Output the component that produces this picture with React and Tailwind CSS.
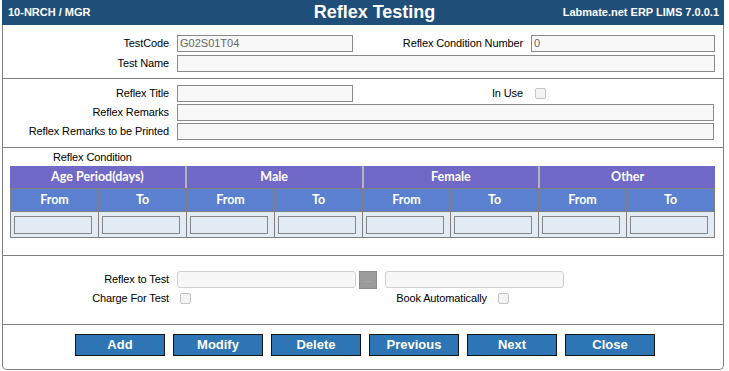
import React from "react";

const inp = "h-[17px] border border-[#8a8a8a] bg-[#f8f8f8] px-[2px] text-[11px] leading-[15px] text-[#666]";
const lbl = "text-right leading-[17px] whitespace-nowrap tracking-[-0.12px]";

function Check() {
  return <div className="h-[11px] w-[11px] rounded-[2px] border border-[#c4c4c4] bg-[#f4f4f4]" />;
}

function Btn({ children }) {
  return (
    <div className="flex h-[22px] w-[90px] items-center justify-center border border-[#141414] bg-[#2e75b6] text-[13px] font-bold text-white">
      {children}
    </div>
  );
}

export default function App() {
  const groups = ["Age Period(days)", "Male", "Female", "Other"];
  const cols = Array.from({ length: 8 }, (_, i) => (i % 2 === 0 ? "From" : "To"));
  return (
    <div className="ml-[2px] w-[722px] font-['Liberation_Sans',Arial,sans-serif] text-[11px] text-black">
      <div className="flex h-[25px] items-center bg-[#1f4e79] pl-[6px] pr-[5px] text-white">
        <div className="flex-1 text-[11px] font-bold">10-NRCH / MGR</div>
        <div className="ml-[22px] text-[18px] font-bold leading-[25px]">Reflex Testing</div>
        <div className="flex-1 text-right text-[11px] font-bold">Labmate.net ERP LIMS 7.0.0.1</div>
      </div>
      <div className="rounded-b-[5px] border border-t-0 border-[#808080]">
        {/* Section 1 */}
        <div className="grid grid-cols-[166px_176px_162px_184px] gap-x-[8px] gap-y-[3px] border-b border-[#808080] pb-[6px] pt-[10px]">
          <div className={lbl}>TestCode</div>
          <div className={inp}>G02S01T04</div>
          <div className={lbl}>Reflex Condition Number</div>
          <div className={inp}>0</div>
          <div className={lbl}>Test Name</div>
          <div className={`${inp} col-span-3`} />
        </div>
        {/* Section 2 */}
        <div className="grid grid-cols-[166px_176px_162px_184px] gap-x-[8px] gap-y-[2px] border-b border-[#808080] pb-[7px] pt-[6px]">
          <div className={lbl}>Reflex Title</div>
          <div className={inp} />
          <div className={lbl}>In Use</div>
          <div className="flex items-center pl-[4px]">
            <Check />
          </div>
          <div className={lbl}>Reflex Remarks</div>
          <div className={`${inp} col-span-3 mr-[1px]`} />
          <div className={lbl}>Reflex Remarks to be Printed</div>
          <div className={`${inp} col-span-3 mr-[1px]`} />
        </div>
        {/* Section 3 */}
        <div className="border-b border-[#808080] pb-[17px] pt-[2px]">
          <div className="pl-[50px] leading-[14px] tracking-[-0.12px]">Reflex Condition</div>
          <div className="ml-[7px] mt-[2px] w-[705px] font-['Lato',sans-serif] text-[12.5px] font-bold text-white">
            <div className="grid grid-cols-4 gap-x-[2px] bg-[#b4b4b4]">
              {groups.map((g) => (
                <div key={g} className="flex h-[22px] items-center justify-center bg-[#7169c8]">
                  {g}
                </div>
              ))}
            </div>
            <div className="grid grid-cols-8 border-b border-r border-[#808080]">
              {cols.map((c, i) => (
                <div key={"h" + i} className="flex h-[23px] items-center justify-center border-l border-t border-[#808080] bg-[#5a80cf]">
                  {c}
                </div>
              ))}
              {cols.map((c, i) => (
                <div key={"r" + i} className="flex h-[26px] items-center border-l border-t border-[#808080] bg-[#e2eaf4] px-[3px]">
                  <div className="h-[18px] w-[78px] border border-[#858585] bg-[#e2eaf4]" />
                </div>
              ))}
            </div>
          </div>
        </div>
        {/* Section 4 */}
        <div className="flex flex-col gap-y-[2px] border-b border-[#808080] pb-[17px] pt-[15px]">
          <div className="flex h-[17px] items-center">
            <div className={`${lbl} w-[166px]`}>Reflex to Test</div>
            <div className="ml-[8px] h-[17px] w-[179px] rounded-[3px] border border-[#d0d0d0] bg-[#f7f7f7]" />
            <div className="ml-[3px] flex h-[18px] w-[18px] items-center justify-center border border-[#8c8c8c] bg-[#9b9b9b] text-[7px] leading-none text-[#c8c8c8]">
              ...
            </div>
            <div className="ml-[8px] h-[17px] w-[179px] rounded-[3px] border border-[#d0d0d0] bg-[#f7f7f7]" />
          </div>
          <div className="flex h-[17px] items-center">
            <div className={`${lbl} w-[166px]`}>Charge For Test</div>
            <div className="ml-[11px]">
              <Check />
            </div>
            <div className={`${lbl} w-[296px]`}>Book Automatically</div>
            <div className="ml-[11px]">
              <Check />
            </div>
          </div>
        </div>
        {/* Buttons */}
        <div className="flex gap-x-[8px] pb-[13px] pl-[72px] pt-[9px]">
          <Btn>Add</Btn>
          <Btn>Modify</Btn>
          <Btn>Delete</Btn>
          <Btn>Previous</Btn>
          <Btn>Next</Btn>
          <Btn>Close</Btn>
        </div>
      </div>
    </div>
  );
}
